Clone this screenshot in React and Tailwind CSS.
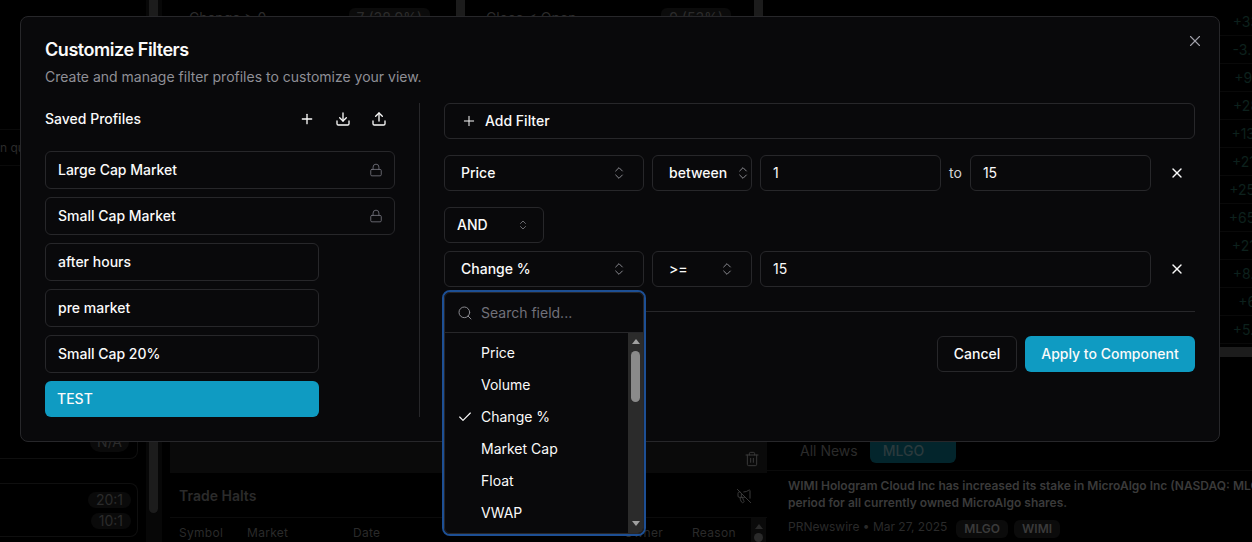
import React from "react";
import { Plus, Download, Upload, Lock, ChevronsUpDown, X, Search, Check, Trash2, MegaphoneOff } from "lucide-react";

const rows = [
  { t: "+33.1%", w: "w-[514px]" },
  { t: "-3.25%", w: "w-[515px]" },
  { t: "+9.41%", w: "w-[517px]" },
  { t: "+28.1%", w: "w-[514px]" },
  { t: "+13.2%", w: "w-[514px]" },
  { t: "+21.5%", w: "w-[514px]" },
  { t: "+25.0%", w: "w-[514px]" },
  { t: "+65.3%", w: "w-[514px]" },
  { t: "+21.8%", w: "w-[514px]" },
  { t: "+8.62%", w: "w-[518px]" },
  { t: "+6.1%", w: "w-[511px]" },
  { t: "+5.92%", w: "w-[518px]" },
];
const fields = ["Price", "Volume", "Change %", "Market Cap", "Float", "VWAP"];

function Select({ label, className, small }) {
  return (
    <div className={`h-9 shrink-0 flex items-center justify-between gap-2 rounded-md border border-[#27272a] text-sm font-medium text-[#fafafa] whitespace-nowrap ${className}`}>
      <span className="shrink-0">{label}</span>
      <ChevronsUpDown className={`shrink-0 text-[#8a8a90] ${small ? "w-3 h-3" : "w-4 h-4"}`} strokeWidth={1.5} />
    </div>
  );
}

function Field({ value }) {
  return (
    <div className="h-9 flex-1 flex items-center rounded-md border border-[#27272a] px-3 text-sm text-[#fafafa]">{value}</div>
  );
}

function RemoveButton() {
  return (
    <div className="w-9 h-9 shrink-0 flex items-center justify-center text-[#fafafa]">
      <X className="w-4 h-4" strokeWidth={2} />
    </div>
  );
}

function Profile({ name, locked, wide }) {
  return (
    <div className={`h-[38px] shrink-0 flex items-center justify-between rounded-md border border-[#27272a] pl-3 pr-[11px] text-sm font-medium text-[#fafafa] ${wide ? "w-[350px]" : "w-[274px]"}`}>
      <span>{name}</span>
      {locked && <Lock className="w-[14px] h-[14px] text-[#71717a]" strokeWidth={1.5} />}
    </div>
  );
}

function Arrow({ up, className = "" }) {
  return (
    <svg viewBox="0 0 8 5" className={`w-2 h-[5px] shrink-0 ${className}`} fill="currentColor">
      <polygon points={up ? "4,0 8,5 0,5" : "0,0 8,0 4,5"} />
    </svg>
  );
}

function Background() {
  return (
    <div className="h-full flex bg-black text-[#2b2b2b] overflow-hidden">
      <div className="w-[146px] shrink-0 flex flex-col overflow-hidden">
        <div className="h-[130px] shrink-0 border-b border-[#0a0a0a]" />
        <div className="h-[36px] shrink-0 pt-[10px] text-xs leading-4 whitespace-nowrap border-b border-[#0a0a0a]">n quality</div>
        <div className="h-[293px] shrink-0 flex flex-col justify-end items-end border-b border-r border-[#0f0f0f] rounded-br-lg mr-[8px] pr-2 pb-[6px]">
          <span className="px-[7px] h-5 leading-5 rounded-full bg-[#0a0a0a] text-sm">N/A</span>
        </div>
        <div className="h-[54px] shrink-0 mt-6 flex flex-col items-end justify-center gap-[5px] border border-l-0 border-[#0f0f0f] rounded-r-lg mr-[8px] pr-[6px] text-sm">
          <span className="px-2 h-4 leading-4 rounded-full bg-[#0a0a0a]">20:1</span>
          <span className="px-2 h-4 leading-4 rounded-full bg-[#0a0a0a]">10:1</span>
        </div>
      </div>
      <div className="w-[16px] shrink-0 bg-[#070707] pl-[3px]">
        <div className="w-[9px] h-[513px] rounded-b-md bg-[#1c1c1c]" />
      </div>
      <div className="w-[597px] shrink-0 ml-[8px] flex flex-col">
        <div className="h-[442px] shrink-0 flex items-start text-sm">
          <div className="w-[286px] h-7 pt-[8px] pl-[19px] pr-[26px] flex justify-between">
            <span>Change &gt; 0</span>
            <span className="px-2 rounded-md bg-[#0b0b0b]">7 (38.9%)</span>
          </div>
          <div className="w-[9px] h-4 bg-[#1c1c1c]" />
          <div className="w-[245px] h-7 pt-[8px] ml-[21px] flex justify-between">
            <span>Close &lt; Open</span>
            <span className="px-2 rounded-md bg-[#0b0b0b]">9 (53%)</span>
          </div>
          <div className="w-[9px] h-4 ml-[23px] bg-[#1c1c1c]" />
        </div>
        <div className="h-[31px] shrink-0 bg-[#0a0a0a] flex items-center justify-end pr-[7px] pt-[3px]">
          <Trash2 className="w-4 h-4 text-[#3a3a3a]" strokeWidth={1.5} />
        </div>
        <div className="h-[45px] shrink-0 flex items-center justify-between pl-[9px] pr-[15px] pt-[1px] border-b border-[#0b0b0b]">
          <span className="text-sm font-semibold">Trade Halts</span>
          <MegaphoneOff className="w-4 h-4 text-[#3a3a3a]" strokeWidth={1.5} />
        </div>
        <div className="flex-1 min-h-0 flex pl-[9px] text-xs leading-4 tracking-wide text-[#2a2a2a]">
          <span className="w-[68px] pt-[7px]">Symbol</span>
          <span className="w-[106px] pt-[7px]">Market</span>
          <span className="w-[271px] pt-[7px]">Date</span>
          <span className="w-[68px] pt-[7px]">Owner</span>
          <span className="w-[59px] pt-[7px]">Reason</span>
          <div className="w-[15px] bg-[#0a0a0a] flex flex-col items-center pt-[6px] text-[#2a2a2a]">
            <Arrow up />
            <div className="mt-[4px] w-[9px] h-[20px] rounded-full bg-[#2a2a2a]" />
          </div>
        </div>
      </div>
      <div className="flex-1 flex flex-col min-w-0 overflow-hidden">
        <div className="h-[8px] shrink-0" />
        {rows.map((r) => (
          <div key={r.t} className="h-[28px] shrink-0 flex items-center border-b border-[#090909] text-sm text-[#0d211d] whitespace-nowrap">
            <span className={`${r.w} shrink-0 text-right`}>{r.t}</span>
          </div>
        ))}
        <div className="h-[3px] shrink-0" />
        <div className="h-[10px] shrink-0 bg-[#1c1c1c]" />
        <div className="h-[83px] shrink-0" />
        <div className="h-[23px] shrink-0 flex items-center pl-[33px] gap-[12px] text-sm">
          <span className="mt-[-2px]">All News</span>
          <span className="w-[86px] h-[23px] pl-[13px] rounded-b-md bg-[#03252c] text-[#2b3a3d] font-medium leading-[22px]">MLGO</span>
        </div>
        <div className="h-[8px] shrink-0 border-b border-[#0a0a0a]" />
        <div className="pl-[21px] pt-[6px] text-xs font-semibold leading-[17px] text-[#3a3a3a] whitespace-nowrap">
          <div>WIMI Hologram Cloud Inc has increased its stake in MicroAlgo Inc (NASDAQ: MLGO) over the</div>
          <div>period for all currently owned MicroAlgo shares.</div>
        </div>
        <div className="pl-[21px] pt-[7px] flex items-start text-xs leading-[18px] text-[#2a2a2a] whitespace-nowrap">
          <span>PRNewswire • Mar 27, 2025</span>
          <span className="ml-[9px] mt-[2px] px-2 h-[18px] rounded-md bg-[#0b0b0b] font-semibold text-[#3a3a3a]">MLGO</span>
          <span className="ml-[6px] mt-[2px] px-2 h-[18px] rounded-md bg-[#0b0b0b] font-semibold text-[#3a3a3a]">WIMI</span>
        </div>
      </div>
    </div>
  );
}

function Dialog() {
  return (
    <div className="absolute left-[20px] top-[16px] w-[1200px] h-[426px] rounded-lg border border-[#27272a] bg-[#09090b] p-6 text-[#fafafa]">
      <X className="absolute right-[15px] top-[15px] w-[18px] h-[18px] text-[#a1a1aa]" strokeWidth={1.5} />
      <h2 className="text-lg leading-none font-semibold tracking-tight">Customize Filters</h2>
      <p className="mt-2 text-sm text-[#8f8f96]">Create and manage filter profiles to customize your view.</p>
      <div className="mt-4 flex gap-6">
        <div className="w-[350px] shrink-0 flex flex-col">
          <div className="h-8 mb-4 flex items-center justify-between">
            <span className="text-sm font-medium">Saved Profiles</span>
            <div className="flex gap-1">
              <div className="w-8 h-8 flex items-center justify-center"><Plus className="w-4 h-4" strokeWidth={2} /></div>
              <div className="w-8 h-8 flex items-center justify-center"><Download className="w-4 h-4" strokeWidth={2} /></div>
              <div className="w-8 h-8 flex items-center justify-center"><Upload className="w-4 h-4" strokeWidth={2} /></div>
            </div>
          </div>
          <div className="flex flex-col gap-2">
            <Profile name="Large Cap Market" locked wide />
            <Profile name="Small Cap Market" locked wide />
            <Profile name="after hours" />
            <Profile name="pre market" />
            <Profile name="Small Cap 20%" />
            <div className="w-[274px] h-9 flex items-center rounded-md bg-[#0f9bc2] px-3 text-sm font-medium text-[#fafafa]">TEST</div>
          </div>
        </div>
        <div className="w-px h-[314px] bg-[#27272a] shrink-0" />
        <div className="flex-1 min-w-0 flex flex-col">
          <div className="h-9 flex items-center gap-2 rounded-md border border-[#27272a] px-4 text-sm font-medium">
            <Plus className="w-4 h-4" strokeWidth={1.5} />
            <span>Add Filter</span>
          </div>
          <div className="mt-4 flex items-center gap-2">
            <Select label="Price" className="w-[200px] px-4" />
            <Select label="between" className="w-[100px] pl-4" />
            <Field value="1" />
            <span className="text-sm text-[#d4d4d8]">to</span>
            <Field value="15" />
            <RemoveButton />
          </div>
          <div className="mt-4">
            <Select label="AND" small className="w-[100px] pl-3 pr-[14px]" />
          </div>
          <div className="mt-2 flex items-center gap-2">
            <Select label="Change %" className="w-[200px] px-4" />
            <Select label=">=" className="w-[100px] px-4" />
            <Field value="15" />
            <RemoveButton />
          </div>
          <div className="mt-6 h-px bg-[#27272a]" />
          <div className="mt-6 flex justify-end gap-2">
            <div className="w-[80px] h-9 flex items-center justify-center rounded-md border border-[#27272a] text-sm font-medium">Cancel</div>
            <div className="w-[170px] h-9 flex items-center justify-center rounded-md bg-[#0f9bc2] text-sm font-medium">Apply to Component</div>
          </div>
        </div>
      </div>
    </div>
  );
}

function Popover() {
  return (
    <div className="absolute left-[442px] top-[290px] w-[204px] h-[246px] rounded-lg border-2 border-[#1d4f94]">
      <div className="h-full flex flex-col rounded-md border border-[#27272a] bg-[#09090b] overflow-hidden">
        <div className="h-[40px] shrink-0 flex items-center gap-2 border-b border-[#27272a] pl-3 pr-3 text-sm text-[#71717a]">
          <Search className="w-4 h-4 shrink-0 text-[#8a8a90]" strokeWidth={1.5} />
          <span>Search field...</span>
        </div>
        <div className="flex-1 min-h-0 flex">
          <div className="flex-1 min-w-0 pt-1">
            {fields.map((f) => (
              <div key={f} className="h-8 relative flex items-center pl-9 text-sm text-[#fafafa]">
                {f === "Change %" && <Check className="absolute left-3 w-4 h-4" strokeWidth={1.75} />}
                {f}
              </div>
            ))}
          </div>
          <div className="w-[15px] shrink-0 bg-[#2b2b2b] flex flex-col items-center pt-[6px] pb-[7px] text-[#a0a0a0]">
            <Arrow up />
            <div className="mt-[7px] w-[9px] h-[51px] rounded-full bg-[#8a8a8a]" />
            <div className="flex-1" />
            <Arrow />
          </div>
        </div>
      </div>
    </div>
  );
}

export default function App() {
  return (
    <div className="relative w-[1252px] h-[542px] overflow-hidden bg-black" style={{ fontFamily: "Inter, 'Liberation Sans', sans-serif" }}>
      <Background />
      <Dialog />
      <Popover />
    </div>
  );
}
